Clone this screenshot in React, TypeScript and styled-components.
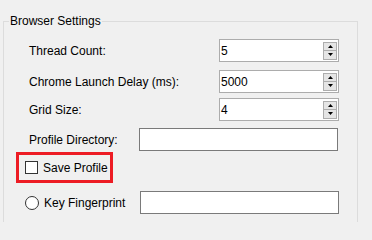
import styled, { createGlobalStyle } from 'styled-components';

const GlobalStyle = createGlobalStyle`
  *, *::before, *::after {
    box-sizing: border-box;
  }
  html, body {
    margin: 0;
    padding: 0;
    background: #f0f0f0;
    font-family: "Liberation Sans", Arial, sans-serif;
    font-size: 12px;
    color: #000;
  }
`;

const Page = styled.div`
  width: 372px;
  height: 222px;
  overflow: hidden;
  padding: 0 14px 0 3px;
`;

const Group = styled.fieldset`
  margin: 14px 0 0 0;
  padding: 0 0 40px 12px;
  border: 1px solid #dcdcdc;
  min-height: 230px;
  min-width: 0;
`;

const Legend = styled.legend`
  margin-left: -7px;
  padding: 0 1px;
  line-height: 15px;
  font-size: 12px;
`;

const Row = styled.div<{ $mt: number }>`
  display: flex;
  align-items: center;
  margin-top: ${p => p.$mt}px;
  height: 23px;
`;

const Label = styled.label<{ $w: number }>`
  width: ${p => p.$w}px;
  padding-left: 13px;
  flex: none;
  white-space: nowrap;
`;

const Spin = styled.div`
  width: 120px;
  height: 23px;
  border: 1px solid #acacac;
  background: #fff;
  display: flex;
  align-items: center;
  padding: 0 1px 0 1px;
`;

const SpinValue = styled.span`
  flex: 1;
  line-height: 14px;
`;

const SpinButtons = styled.div`
  display: flex;
  flex-direction: column;
  width: 14px;
  height: 18px;
`;

const SpinButton = styled.div`
  flex: 1;
  border: 1px solid #adadad;
  background: #e5e5e5;
  display: flex;
  align-items: center;
  justify-content: center;
  & + & {
    border-top: none;
  }
`;

const TextField = styled.div`
  width: 199px;
  height: 23px;
  border: 1px solid #7a7a7a;
  background: #fff;
`;

const Highlight = styled.div`
  display: flex;
  align-items: center;
  width: 97px;
  height: 31px;
  border: 3px solid #ed1c24;
  padding-left: 6px;
  margin-top: 1px;
`;

const CheckBox = styled.span`
  width: 13px;
  height: 13px;
  border: 1px solid #333;
  background: #fff;
  flex: none;
`;

const OptionText = styled.span`
  margin-left: 5px;
  white-space: nowrap;
`;

const RadioLabel = styled.label`
  display: flex;
  align-items: center;
  width: 115px;
  margin-left: 9px;
  flex: none;
`;

const Radio = styled.span`
  width: 14px;
  height: 14px;
  border: 1px solid #333;
  border-radius: 50%;
  background: #fff;
  flex: none;
`;

function Arrow({ up }: { up?: boolean }) {
  return (
    <svg width="5" height="3" viewBox="0 0 5 3">
      <polygon points={up ? '2.5,0 5,3 0,3' : '0,0 5,0 2.5,3'} fill="#000" />
    </svg>
  );
}

function SpinBox({ value }: { value: string }) {
  return (
    <Spin>
      <SpinValue>{value}</SpinValue>
      <SpinButtons>
        <SpinButton><Arrow up /></SpinButton>
        <SpinButton><Arrow /></SpinButton>
      </SpinButtons>
    </Spin>
  );
}

export default function App() {
  return (
    <>
      <GlobalStyle />
      <Page>
        <Group>
          <Legend>Browser Settings</Legend>
          <Row $mt={10}>
            <Label $w={203}>Thread Count:</Label>
            <SpinBox value="5" />
          </Row>
          <Row $mt={8}>
            <Label $w={203}>Chrome Launch Delay (ms):</Label>
            <SpinBox value="5000" />
          </Row>
          <Row $mt={5}>
            <Label $w={203}>Grid Size:</Label>
            <SpinBox value="4" />
          </Row>
          <Row $mt={7}>
            <Label $w={123}>Profile Directory:</Label>
            <TextField />
          </Row>
          <Highlight>
            <CheckBox />
            <OptionText>Save Profile</OptionText>
          </Highlight>
          <Row $mt={8}>
            <RadioLabel>
              <Radio />
              <OptionText>Key Fingerprint</OptionText>
            </RadioLabel>
            <TextField />
          </Row>
        </Group>
      </Page>
    </>
  );
}
